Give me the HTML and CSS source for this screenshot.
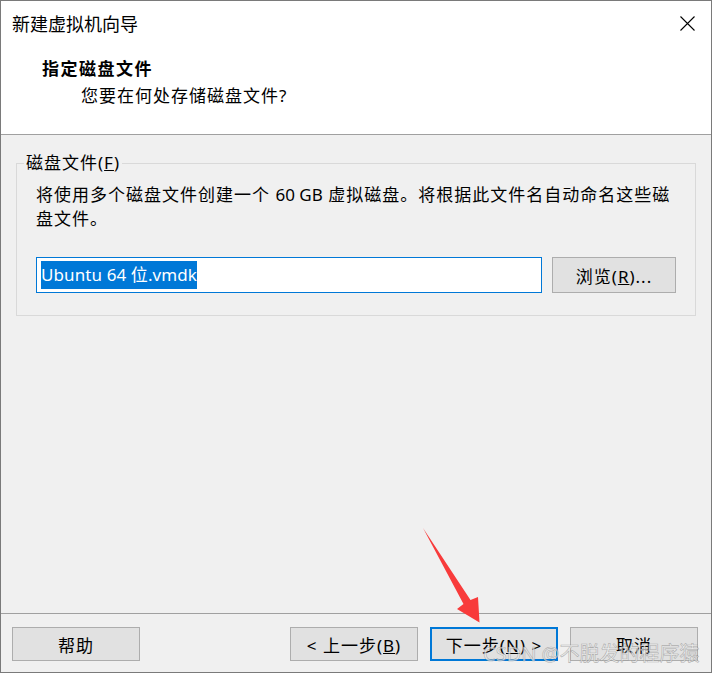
FILE: index.html
```html
<!DOCTYPE html>
<html lang="zh-CN">
<head>
<meta charset="utf-8">
<title>新建虚拟机向导</title>
<link rel="stylesheet" href="styles.css">
</head>
<body>
<div class="window">
  <header class="header">
    <div class="titlebar">
      <span class="title">新建虚拟机向导</span>
      <svg class="close" width="15" height="15" viewBox="0 0 15 15" aria-label="关闭"><path d="M0.5 0.5 L14.5 14.5 M14.5 0.5 L0.5 14.5" stroke="#000" stroke-width="1.1" fill="none"/></svg>
    </div>
    <div class="heading">指定磁盘文件</div>
    <div class="subheading">您要在何处存储磁盘文件<span class="lat">?</span></div>
  </header>
  <main class="content">
    <fieldset class="group">
      <legend>磁盘文件(<u>F</u>)</legend>
      <p class="desc">将使用多个磁盘文件创建一个 <span class="lat">60 GB</span> 虚拟磁盘。将根据此文件名自动命名这些磁<br>盘文件。</p>
      <div class="file-row">
        <div class="input"><span class="sel">Ubuntu 64 位.vmdk</span></div>
        <button class="btn browse">浏览(<u>R</u>)...</button>
      </div>
    </fieldset>
  </main>
  <footer class="footer">
    <button class="btn">帮助</button>
    <div class="nav">
      <button class="btn">&lt; 上一步(<u>B</u>)</button>
      <button class="btn primary">下一步(<u>N</u>) &gt;</button>
      <button class="btn">取消</button>
    </div>
  </footer>
  <svg class="arrow" width="70" height="110" viewBox="415 520 70 110"><polygon points="423,528 470.5,600 478,597 479.5,622.5 457,609 463.5,604" fill="#f83b3b"/></svg>
  <div class="watermark">CSDN @不脱发的程序猿</div>
</div>
</body>
</html>
```
FILE: styles.css
```css
* { box-sizing: border-box; }
html, body { margin: 0; padding: 0; background: #fff; }
body {
  font-family: "Noto Sans", "Noto Sans CJK SC", sans-serif;
  font-size: 17px;
  color: #000;
}
.window {
  position: relative;
  width: 712px;
  height: 673px;
  border: 1px solid #7a7a7a;
  display: flex;
  flex-direction: column;
  background: #f0f0f0;
  overflow: hidden;
}
.header {
  height: 134px;
  flex: none;
  background: #fff;
  border-bottom: 1px solid #a0a0a0;
}
.titlebar {
  height: 44px;
  display: flex;
  align-items: center;
  justify-content: space-between;
  padding: 0 16px 0 11px;
}
.title {
  font-family: "Noto Sans CJK SC", sans-serif;
  font-size: 18px;
  line-height: 24px;
}
.close { display: block; }
.heading {
  margin-top: 12px;
  padding-left: 41px;
  font-weight: bold;
  letter-spacing: 1.5px;
  line-height: 24px;
}
.subheading {
  margin-top: 3px;
  padding-left: 80px;
  letter-spacing: 1px;
  line-height: 24px;
}
.lat { letter-spacing: 0; }
.content {
  flex: 1;
  padding: 0 15px;
}
.group {
  margin: 18px 0 0;
  min-width: 0;
  border: 1px solid #d9d9d9;
  padding: 10px 19px 22px 19px;
}
.group legend {
  margin-left: -12px;
  padding: 0 2px;
  line-height: 20px;
  letter-spacing: 1px;
}
.desc {
  margin: 0;
  line-height: 24px;
  letter-spacing: 1px;
  white-space: nowrap;
}
.file-row {
  margin-top: 26px;
  display: flex;
  gap: 10px;
  height: 36px;
}
.input {
  flex: 1;
  background: #fff;
  border: 1px solid #0078d7;
  padding: 3px 4px;
}
.sel {
  display: inline-block;
  height: 28px;
  line-height: 28px;
  background: #0078d7;
  color: #fff;
  letter-spacing: 0.1px;
}
.btn {
  font: inherit;
  color: #000;
  background: #e1e1e1;
  border: 1px solid #adadad;
  border-radius: 0;
  padding: 0;
  letter-spacing: 1px;
  width: 128px;
  height: 34px;
}
.browse { width: 124px; height: 36px; }
.btn.primary { border: 2px solid #0078d7; }
.footer {
  flex: none;
  height: 59px;
  border-top: 1px solid #a0a0a0;
  display: flex;
  align-items: flex-start;
  padding: 13px 13px 0 11px;
}
.nav {
  margin-left: auto;
  display: flex;
  gap: 12px;
}
.arrow {
  position: absolute;
  left: 414px;
  top: 519px;
}
.watermark {
  position: absolute;
  left: 482px;
  top: 641px;
  font-size: 20px;
  line-height: 24px;
  letter-spacing: 0;
  color: rgba(245, 245, 245, 0.7);
  -webkit-text-stroke: 0.6px rgba(110, 110, 110, 0.5);
  white-space: nowrap;
}
```
